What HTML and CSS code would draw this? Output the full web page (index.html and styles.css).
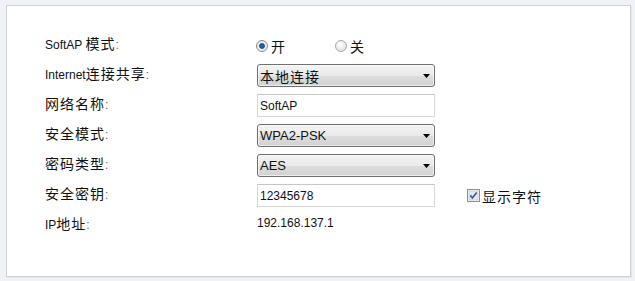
FILE: index.html
```html
<!DOCTYPE html>
<html lang="zh-CN">
<head>
<meta charset="utf-8">
<title>SoftAP</title>
<link rel="stylesheet" href="styles.css">
</head>
<body>
<div class="panel">
  <div class="form">
    <div class="label">SoftAP <span class="cn">模式</span><span class="colon">:</span></div>
    <div class="ctrl">
      <label class="radio-opt"><span class="radio checked"></span><span class="cn">开</span></label>
      <label class="radio-opt"><span class="radio"></span><span class="cn">关</span></label>
    </div>

    <div class="label">Internet<span class="cn">连接共享</span><span class="colon">:</span></div>
    <div class="ctrl">
      <div class="select"><span class="cn">本地连接</span><svg class="arrow" width="7" height="4" viewBox="0 0 7 4"><path d="M0 0H7L3.5 4Z" fill="#000"/></svg></div>
    </div>

    <div class="label"><span class="cn">网络名称</span><span class="colon">:</span></div>
    <div class="ctrl">
      <div class="input">SoftAP</div>
    </div>

    <div class="label"><span class="cn">安全模式</span><span class="colon">:</span></div>
    <div class="ctrl">
      <div class="select"><span>WPA2-PSK</span><svg class="arrow" width="7" height="4" viewBox="0 0 7 4"><path d="M0 0H7L3.5 4Z" fill="#000"/></svg></div>
    </div>

    <div class="label"><span class="cn">密码类型</span><span class="colon">:</span></div>
    <div class="ctrl">
      <div class="select"><span>AES</span><svg class="arrow" width="7" height="4" viewBox="0 0 7 4"><path d="M0 0H7L3.5 4Z" fill="#000"/></svg></div>
    </div>

    <div class="label"><span class="cn">安全密钥</span><span class="colon">:</span></div>
    <div class="ctrl">
      <div class="input">12345678</div>
      <label class="check-opt">
        <svg class="checkbox" width="13" height="13" viewBox="0 0 13 13">
          <rect x="0.5" y="0.5" width="12" height="12" fill="#fff" stroke="#8e8f8f"/>
          <rect x="2" y="2" width="9" height="9" fill="#e6e9ee" stroke="#c4c9d2" stroke-width="0.8"/>
          <path d="M3.3 6.4L5.4 8.9L9.7 3.4" fill="none" stroke="#3c5a97" stroke-width="1.7"/>
        </svg>
        <span class="cn">显示字符</span>
      </label>
    </div>

    <div class="label">IP<span class="cn">地址</span><span class="colon">:</span></div>
    <div class="value">192.168.137.1</div>
  </div>
</div>
</body>
</html>
```

FILE: styles.css
```css
html, body {
  margin: 0;
  padding: 0;
}

body {
  background: #eff3f7;
  font-family: "Liberation Sans", Arial, "Noto Sans CJK SC", sans-serif;
  font-size: 12px;
  color: #111;
  width: 635px;
  height: 281px;
  overflow: hidden;
}

.panel {
  margin: 5px 0 0 6px;
  width: 623px;
  height: 270px;
  background: #fff;
  border: 1px solid #d0d0d0;
  box-shadow: 1px 1px 0 #e4e7eb;
}

.form {
  display: grid;
  grid-template-columns: 212px 1fr;
  grid-auto-rows: 30px;
  padding: 28px 0 0 38px;
}

.cn {
  font-family: "Noto Sans CJK SC", sans-serif;
  font-size: 14px;
  letter-spacing: 1px;
}

.colon {
  color: #666;
}

.label {
  line-height: 18px;
  white-space: nowrap;
}

.ctrl {
  display: flex;
  align-items: center;
  height: 23px;
}

.radio-opt {
  display: flex;
  align-items: center;
  width: 80px;
  margin-left: -1px;
}

.radio {
  box-sizing: border-box;
  width: 12px;
  height: 12px;
  border-radius: 50%;
  border: 1px solid #a8a8a8;
  background: radial-gradient(circle at 40% 35%, #ffffff 0%, #e4e4e4 70%, #d2d2d2 100%);
  margin-right: 3px;
}

.radio.checked {
  border-color: #8a8a8a;
  background: radial-gradient(circle at 50% 50%, #2a6fc0 0%, #1b4f8f 28%, #3c6fa8 38%, #f2f2f2 45%, #d8d8d8 100%);
}

.select {
  box-sizing: border-box;
  width: 178px;
  height: 23px;
  border: 1px solid #707070;
  border-radius: 3px;
  background: linear-gradient(#f4f4f4, #e9e9e9 50%, #dddddd 51%, #d2d2d2);
  display: flex;
  align-items: center;
  justify-content: space-between;
  padding: 0 4px 0 2px;
  white-space: nowrap;
  font-size: 13px;
  box-shadow: inset 0 0 0 1px rgba(255,255,255,0.6);
}

.arrow {
  display: block;
  margin-top: 1px;
}

.input {
  box-sizing: border-box;
  width: 178px;
  height: 23px;
  border: 1px solid #d8d8d8;
  border-top-color: #c6c6c6;
  background: #fff;
  display: flex;
  align-items: center;
  padding-left: 2px;
}

.check-opt {
  display: flex;
  align-items: center;
  margin-left: 32px;
}

.checkbox {
  display: block;
  margin-right: 2px;
}

.value {
  line-height: 18px;
}
```
